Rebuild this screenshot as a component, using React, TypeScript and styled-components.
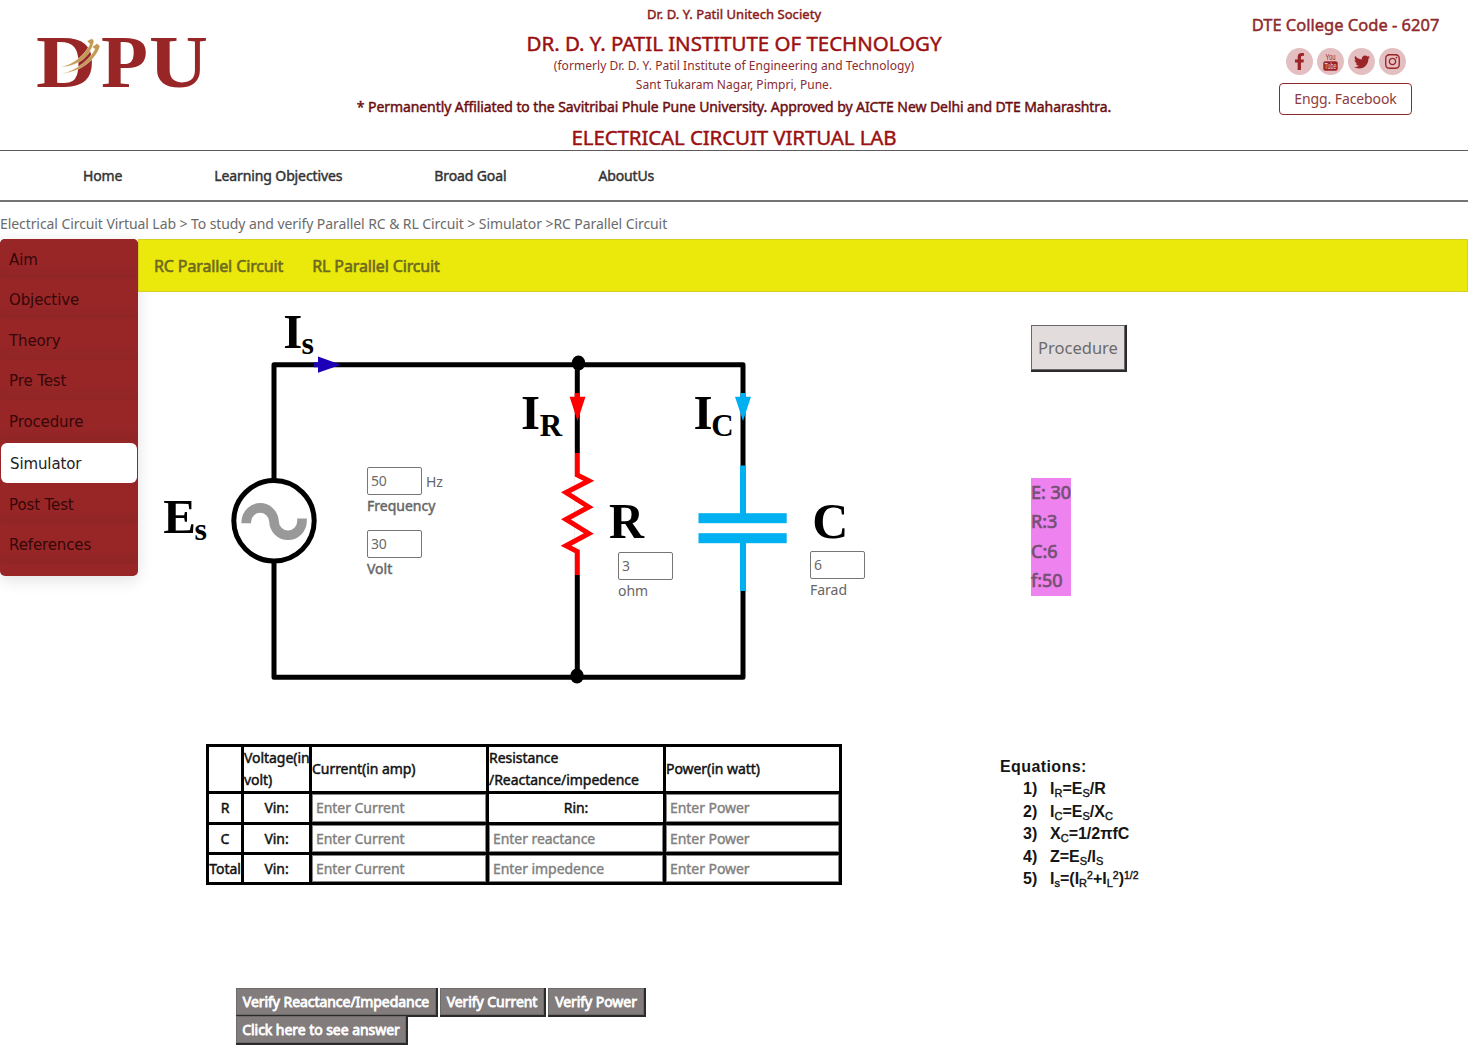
import React from 'react';
import styled, { createGlobalStyle, css } from 'styled-components';
import { FaFacebookF, FaTwitter, FaInstagram } from 'react-icons/fa';

const GlobalStyle = createGlobalStyle`
  *, *::before, *::after { box-sizing: border-box; }
  html, body { margin: 0; background: #fff; }
  body { font-family: "Noto Sans", sans-serif; font-size: 14px; color: #666; overflow: hidden; }
`;

const thicken = css`
  font-weight: 400;
  -webkit-text-stroke: 0.45px currentColor;
`;

const Page = styled.div`
  width: 1468px;
  height: 1061px;
  overflow: hidden;
`;

const Header = styled.header`
  display: grid;
  grid-template-columns: 320px 1fr 320px;
  height: 151px;
  border-bottom: 1px solid #5d595c;
`;

const LogoBox = styled.div`
  padding: 9px 0 0 20px;
`;

const Titles = styled.div`
  display: flex;
  flex-direction: column;
  align-items: center;
  white-space: nowrap;
`;

const TitleLine = styled.div<{ $size: number; $height: number; $strong?: boolean; $color: string; $spacing?: number }>`
  font-size: ${p => p.$size}px;
  line-height: ${p => p.$height}px;
  height: ${p => p.$height}px;
  letter-spacing: ${p => p.$spacing ?? 0}px;
  color: ${p => p.$color};
  ${p => p.$strong && thicken}
`;

const Contact = styled.div`
  display: flex;
  flex-direction: column;
  align-items: center;
  padding: 12px 0 0 75px;
`;

const CollegeCode = styled.div`
  font-size: 16.5px;
  line-height: 25px;
  color: #8f2a2c;
  white-space: nowrap;
  ${thicken}
`;

const Socials = styled.div`
  display: flex;
  gap: 4px;
  margin: 11px 0 0 1px;
`;

const Social = styled.a`
  display: flex;
  align-items: center;
  justify-content: center;
  width: 27px;
  height: 27px;
  border-radius: 50%;
  background: #e4bfc1;
  color: #9b2427;
`;

const FacebookButton = styled.button`
  width: 133px;
  height: 32px;
  margin-top: 8px;
  padding: 0 0 2px;
  border: 1px solid #8f2a2c;
  border-radius: 4px;
  background: #fff;
  color: #8f3a3c;
  font: 14px "Noto Sans", sans-serif;
  letter-spacing: -0.1px;
`;

const Nav = styled.nav`
  display: flex;
  align-items: center;
  gap: 92px;
  height: 51px;
  padding: 0 0 1px 83px;
  border-bottom: 2px solid #757375;
`;

const NavLink = styled.a`
  font-size: 14px;
  letter-spacing: -0.12px;
  color: #333;
  ${thicken}
`;

const Breadcrumb = styled.div`
  height: 37px;
  padding-top: 11px;
  line-height: 22px;
  letter-spacing: -0.08px;
  color: #6b6b6b;
  white-space: nowrap;
`;

const Body = styled.div`
  display: flex;
  align-items: flex-start;
`;

const Sidebar = styled.aside`
  width: 138px;
  height: 337px;
  flex: none;
  border-radius: 5px;
  background: #982627;
  box-shadow: 0 4px 16px rgba(0, 0, 0, 0.12);
`;

const SideItem = styled.a<{ $active?: boolean }>`
  display: flex;
  align-items: center;
  height: ${p => (p.$active ? 40 : 40.5)}px;
  margin: ${p => (p.$active ? '1.5px 1px 1px' : '0')};
  padding: 1px 0 0 9px;
  border-radius: ${p => (p.$active ? 6 : 5)}px;
  background: ${p => (p.$active ? '#fff' : 'linear-gradient(#982627 60%, #902526 94%, #982627)')};
  color: ${p => (p.$active ? '#222' : '#350708')};
  font: 15px "DejaVu Sans", sans-serif;
  letter-spacing: -0.12px;
`;

const Main = styled.main`
  flex: 1;
`;

const TabBar = styled.div`
  display: flex;
  align-items: center;
  gap: 29px;
  height: 53px;
  padding-left: 15px;
  border: 1px solid #d8cf25;
  background: #ebe80b;
`;

const Tab = styled.a`
  font-size: 16px;
  letter-spacing: -0.13px;
  color: #6d6b20;
  ${thicken}
  -webkit-text-stroke-width: 0.6px;
`;

const Workspace = styled.div`
  display: flex;
  height: 452px;
`;

const Bench = styled.div`
  position: relative;
  width: 893px;
  height: 452px;
  flex: none;
`;

const FieldGroup = styled.label<{ $x: number; $y: number }>`
  position: absolute;
  left: ${p => p.$x}px;
  top: ${p => p.$y}px;
  display: flex;
  flex-direction: column;
`;

const FieldRow = styled.span`
  display: flex;
  align-items: center;
  gap: 4px;
  height: 28px;
`;

const ValueInput = styled.input`
  width: 55px;
  height: 28px;
  padding: 0 3px 1px;
  border: 1px solid #767676;
  border-radius: 2px;
  background: #fff;
  color: #6b6b6b;
  font: 14px "Noto Sans", sans-serif;
  letter-spacing: -0.3px;
`;

const FieldName = styled.span<{ $strong?: boolean }>`
  line-height: 22px;
  ${p => p.$strong && thicken}
`;

const SidePanel = styled.div`
  display: flex;
  flex-direction: column;
  align-items: flex-start;
  padding-top: 33px;
`;

const ProcedureButton = styled.button`
  width: 94px;
  height: 45px;
  padding: 0 0 1px;
  border: 1px solid #6c6868;
  background: #e3dcdc;
  color: #6b6b6b;
  box-shadow: 1px 1px 0 1px #2b2b2b;
  font: 16.5px "Noto Sans", sans-serif;
`;

const Readout = styled.div`
  margin-top: 108px;
  width: 40px;
  background: #ee82ee;
  color: #755075;
  font-size: 18px;
  line-height: 29.4px;
  white-space: nowrap;
  ${thicken}
  -webkit-text-stroke-width: 0.7px;
`;

const Results = styled.div`
  display: flex;
  height: 244px;
`;

const DataTable = styled.table`
  width: 636px;
  height: 141px;
  margin-left: 68px;
  flex: none;
  table-layout: fixed;
  border-collapse: collapse;
  color: #111;
  letter-spacing: -0.05px;
  ${thicken}
`;

const Cell = styled.td<{ $w?: number; $h?: number; $center?: boolean }>`
  width: ${p => (p.$w ? p.$w + 'px' : 'auto')};
  height: ${p => p.$h ?? 30}px;
  padding: 0;
  border: 3px solid #000;
  line-height: 22px;
  text-align: ${p => (p.$center ? 'center' : 'left')};
  white-space: nowrap;
`;

const EntryInput = styled.input`
  display: block;
  width: 100%;
  height: 27px;
  padding: 0 3px;
  border: 1px solid #858585;
  background: #fff;
  font: 14px "Noto Sans", sans-serif;
  letter-spacing: -0.05px;
  tr:nth-child(2) & { height: 28px; padding-bottom: 1px; }
  &::placeholder { color: #808080; -webkit-text-stroke: 0.4px #808080; }
`;

const Equations = styled.div`
  margin: 12px 0 0 158px;
  color: #151515;
  font: bold 16px/22.4px "Liberation Sans", Arial, sans-serif;
  white-space: nowrap;
`;

const EquationsTitle = styled.div`
  letter-spacing: 0.4px;
`;

const Equation = styled.div`
  display: flex;
  padding-left: 23px;
`;

const EqNumber = styled.span`
  width: 27px;
`;

const Script = styled.span<{ $up?: boolean }>`
  display: inline-block;
  line-height: 0;
  font-size: ${p => (p.$up ? 10.5 : 11)}px;
  font-weight: 400;
  -webkit-text-stroke: 0.4px currentColor;
  transform: translateY(${p => (p.$up ? -5 : 3)}px);
`;

const Actions = styled.div`
  display: flex;
  flex-wrap: wrap;
  align-content: flex-start;
  gap: 0 4px;
  width: 460px;
  margin-left: 98px;
`;

const ActionButton = styled.button<{ $w: number }>`
  width: ${p => p.$w}px;
  height: 27px;
  margin-bottom: 1px;
  padding: 0;
  border: 1px solid #6f6a6a;
  background: #827c7c;
  color: #fff;
  box-shadow: 1px 1px 0 1px #2b2b2b;
  font: 14px "Noto Sans", sans-serif;
  letter-spacing: -0.05px;
  white-space: nowrap;
  ${thicken}
  -webkit-text-stroke-width: 0.8px;
`;

const Logo = () => (
  <svg width="210" height="110" viewBox="20 10 210 110" style={{ display: 'block' }}>
    <g fill="#982627" fontFamily="Liberation Serif, serif" fontWeight="bold" fontSize="75">
      <text x="36" y="87.5" textLength="60" lengthAdjust="spacingAndGlyphs">D</text>
      <text x="101" y="87.5" textLength="47" lengthAdjust="spacingAndGlyphs">P</text>
      <text x="149" y="87.5" textLength="59" lengthAdjust="spacingAndGlyphs">U</text>
    </g>
    <g fill="#c29a52" stroke="#fff" strokeWidth="0.4">
      <path d="M61 68 C74 65 85 56 90 45 L87 42 L92 39.5 L94 42 C91 56 80 67 61 68Z" />
      <path d="M61 75 C78 71 90 60 95 50 L92 48 L97 44.5 L100 47 C96 61 80 73 61 75Z" />
    </g>
  </svg>
);

const YouTubeMark = () => (
  <svg width="15" height="18" viewBox="0 0 15 18" overflow="visible">
    <text x="2.5" y="7" fontFamily="Liberation Sans, sans-serif" fontSize="8.5" textLength="10" lengthAdjust="spacingAndGlyphs" fill="#9b2427">You</text>
    <rect x="0.3" y="8.2" width="14.4" height="9.6" rx="2" fill="#9b2427" />
    <text x="1.6" y="16" fontFamily="Liberation Sans, sans-serif" fontSize="8.5" textLength="11.8" lengthAdjust="spacingAndGlyphs" fill="#f0d5d6">Tube</text>
  </svg>
);

const Circuit = () => (
  <svg width="893" height="452" viewBox="138 292 893 452" style={{ display: 'block' }}>
    <g fill="none" stroke="#000" strokeWidth="5" strokeLinejoin="round">
      <rect x="274" y="364.7" width="469" height="312.6" />
      <path d="M577.3 365V677" />
    </g>
    <ellipse cx="578.5" cy="363" rx="6.8" ry="7.5" />
    <ellipse cx="577" cy="676" rx="6.8" ry="7.5" />
    <circle cx="274" cy="520.8" r="40.2" fill="#fff" stroke="#000" strokeWidth="5" />
    <path d="M246.3 523.3V521A13.9 14.3 0 0 1 274 521A14 14.3 0 0 0 302 521V518.5" fill="none" stroke="#999" strokeWidth="9.6" />
    <path d="M314 362.2H318V356.5L341 364.7L318 372.8V367.2H314Z" fill="#1c00b8" />
    <path d="M574.7 393H580V396.8H585.5L577.5 421L569.6 396.8H574.7Z" fill="#f00" />
    <path d="M740.4 393H745.6V396.8H751L743 421L735 396.8H740.4Z" fill="#00b0f0" />
    <path d="M577.3 453V575" stroke="#fff" strokeWidth="6" />
    <path d="M577.3 453V475L588.8 480.8L566 492.5L588.8 507L566 519.3L588.8 533.5L566 545.7L577.3 551.5V575" fill="none" stroke="#f00" strokeWidth="5" />
    <rect x="738" y="514" width="10" height="28" fill="#fff" />
    <g fill="#00b0f0">
      <rect x="740" y="465.5" width="5.6" height="50" />
      <rect x="740" y="541" width="5.6" height="50" />
      <rect x="698.5" y="513.2" width="88.2" height="10" />
      <rect x="698.5" y="533.2" width="88.2" height="10" />
    </g>
    <g fontFamily="Liberation Serif, serif" fontWeight="bold" fontSize="49" fill="#000">
      <text x="283.3" y="348">I</text>
      <text x="301.5" y="354" fontSize="32">s</text>
      <text x="163.2" y="533">E</text>
      <text x="194.5" y="539.5" fontSize="32">s</text>
      <text x="521" y="428.5">I</text>
      <text x="539.8" y="435.5" fontSize="31">R</text>
      <text x="693.5" y="428.5">I</text>
      <text x="711.3" y="435.5" fontSize="31">C</text>
      <text x="609" y="538" fontSize="50" textLength="35" lengthAdjust="spacingAndGlyphs">R</text>
      <text x="812.3" y="538" fontSize="50">C</text>
    </g>
  </svg>
);

const menu = ['Aim', 'Objective', 'Theory', 'Pre Test', 'Procedure', 'Simulator', 'Post Test', 'References'];

const sub = (t: string) => <Script>{t}</Script>;
const sup = (t: string) => <Script $up>{t}</Script>;

const equations = [
  <>I{sub('R')}=E{sub('S')}/R</>,
  <>I{sub('C')}=E{sub('S')}/X{sub('C')}</>,
  <>X{sub('C')}=1/2πfC</>,
  <>Z=E{sub('S')}/I{sub('S')}</>,
  <>I{sub('s')}=(I{sub('R')}{sup('2')}+I{sub('L')}{sup('2')}){sup('1/2')}</>,
];

const fields = [
  { x: 229, y: 175, value: '50', unit: 'Hz', name: 'Frequency', strong: true },
  { x: 229, y: 238, value: '30', name: 'Volt', strong: true },
  { x: 480, y: 260, value: '3', name: 'ohm' },
  { x: 672, y: 259, value: '6', name: 'Farad' },
];

const rows = [
  { name: 'R', third: null },
  { name: 'C', third: 'Enter reactance' },
  { name: 'Total', third: 'Enter impedence' },
];

export default function App() {
  return (
    <Page>
      <GlobalStyle />
      <Header>
        <LogoBox><Logo /></LogoBox>
        <Titles>
          <TitleLine $size={13} $height={29} $strong $color="#8b1a1a" $spacing={0.05}>Dr. D. Y. Patil Unitech Society</TitleLine>
          <TitleLine $size={20.5} $height={28} $strong $color="#9b1010" $spacing={-0.03}>DR. D. Y. PATIL INSTITUTE OF TECHNOLOGY</TitleLine>
          <TitleLine $size={12} $height={18} $color="#8b2c30" $spacing={0.05}>(formerly Dr. D. Y. Patil Institute of Engineering and Technology)</TitleLine>
          <TitleLine $size={12} $height={20} $color="#8b2c30" $spacing={0.03}>Sant Tukaram Nagar, Pimpri, Pune.</TitleLine>
          <TitleLine $size={14} $height={23} $strong $color="#6d0d10" $spacing={-0.08}>* Permanently Affiliated to the Savitribai Phule Pune University. Approved by AICTE New Delhi and DTE Maharashtra.</TitleLine>
          <TitleLine $size={20.5} $height={38} $strong $color="#9b1010" $spacing={-0.12}>ELECTRICAL CIRCUIT VIRTUAL LAB</TitleLine>
        </Titles>
        <Contact>
          <CollegeCode>DTE College Code - 6207</CollegeCode>
          <Socials>
            <Social><FaFacebookF size={17} /></Social>
            <Social><YouTubeMark /></Social>
            <Social><FaTwitter size={16} /></Social>
            <Social><FaInstagram size={17} /></Social>
          </Socials>
          <FacebookButton>Engg. Facebook</FacebookButton>
        </Contact>
      </Header>
      <Nav>
        <NavLink>Home</NavLink>
        <NavLink>Learning Objectives</NavLink>
        <NavLink>Broad Goal</NavLink>
        <NavLink>AboutUs</NavLink>
      </Nav>
      <Breadcrumb>Electrical Circuit Virtual Lab &gt; To study and verify Parallel RC &amp; RL Circuit &gt; Simulator &gt;RC Parallel Circuit</Breadcrumb>
      <Body>
        <Sidebar>
          {menu.map(m => <SideItem key={m} $active={m === 'Simulator'}>{m}</SideItem>)}
        </Sidebar>
        <Main>
          <TabBar>
            <Tab>RC Parallel Circuit</Tab>
            <Tab>RL Parallel Circuit</Tab>
          </TabBar>
          <Workspace>
            <Bench>
              <Circuit />
              {fields.map(f => (
                <FieldGroup key={f.name} $x={f.x} $y={f.y}>
                  <FieldRow><ValueInput defaultValue={f.value} />{f.unit}</FieldRow>
                  <FieldName $strong={f.strong}>{f.name}</FieldName>
                </FieldGroup>
              ))}
            </Bench>
            <SidePanel>
              <ProcedureButton>Procedure</ProcedureButton>
              <Readout>
                <div>E: 30</div>
                <div>R:3</div>
                <div>C:6</div>
                <div>f:50</div>
              </Readout>
            </SidePanel>
          </Workspace>
          <Results>
            <DataTable>
              <tbody>
                <tr>
                  <Cell $w={35} $h={47} />
                  <Cell $w={68}>Voltage(in<br />volt)</Cell>
                  <Cell $w={177}>Current(in amp)</Cell>
                  <Cell $w={177}>Resistance<br />/Reactance/impedence</Cell>
                  <Cell $w={176}>Power(in watt)</Cell>
                </tr>
                {rows.map(r => (
                  <tr key={r.name}>
                    <Cell $center>{r.name}</Cell>
                    <Cell $center>Vin:</Cell>
                    <Cell><EntryInput placeholder="Enter Current" /></Cell>
                    {r.third ? <Cell><EntryInput placeholder={r.third} /></Cell> : <Cell $center>Rin:</Cell>}
                    <Cell><EntryInput placeholder="Enter Power" /></Cell>
                  </tr>
                ))}
              </tbody>
            </DataTable>
            <Equations>
              <EquationsTitle>Equations:</EquationsTitle>
              {equations.map((e, i) => (
                <Equation key={i}><EqNumber>{i + 1})</EqNumber><span>{e}</span></Equation>
              ))}
            </Equations>
          </Results>
          <Actions>
            <ActionButton $w={200}>Verify Reactance/Impedance</ActionButton>
            <ActionButton $w={104}>Verify Current</ActionButton>
            <ActionButton $w={96}>Verify Power</ActionButton>
            <ActionButton $w={170}>Click here to see answer</ActionButton>
          </Actions>
        </Main>
      </Body>
    </Page>
  );
}
